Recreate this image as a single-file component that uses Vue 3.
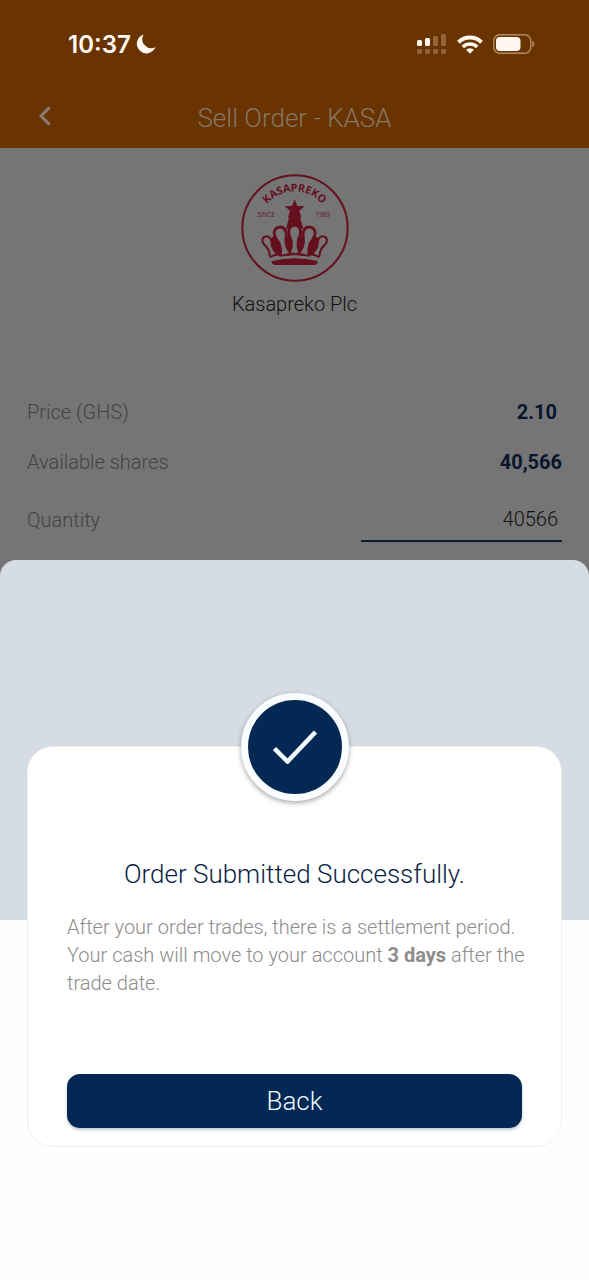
<script setup>
import { ref } from 'vue'

const quantity = ref('40566')
</script>

<template>
  <div class="screen">
    <header class="top">
      <div class="status">
        <div class="clock">
          <span>10:37</span>
          <svg class="moon" viewBox="0 0 20 20" aria-hidden="true">
            <path d="M7.6.6A9.6 9.6 0 1 0 19.4 13.2 9 9 0 0 1 7.6.6Z" fill="#fff8f0" />
          </svg>
        </div>
        <div class="indicators">
          <svg class="signal" viewBox="0 0 30 20" aria-hidden="true">
            <g fill="#fff8f0">
              <rect x="0" y="6" width="5" height="6" rx="1.5" />
              <rect x="8" y="4" width="5" height="8" rx="1.5" />
            </g>
            <g fill="#91643a">
              <rect x="16" y="2" width="5" height="10" rx="1.5" />
              <rect x="24" y="0" width="5" height="12" rx="1.5" />
              <rect x="0" y="15" width="5" height="5" rx="1.5" />
              <rect x="8" y="15" width="5" height="5" rx="1.5" />
              <rect x="16" y="15" width="5" height="5" rx="1.5" />
              <rect x="24" y="15" width="5" height="5" rx="1.5" />
            </g>
          </svg>
          <svg class="wifi" viewBox="0 0 26 19" aria-hidden="true">
            <g fill="none" stroke="#fff8f0" stroke-width="4">
              <path d="M1.5 7.2a16.4 16.4 0 0 1 23 0" />
              <path d="M5.800 11.900a10.300 10.300 0 0 1 14.400 0" stroke-width="3.600" />
            </g>
            <path d="M13 18.8l-3.9-4a5.6 5.6 0 0 1 7.8 0Z" fill="#fff8f0" />
          </svg>
          <svg class="battery" viewBox="0 0 42 20" aria-hidden="true">
            <rect x=".8" y=".8" width="37" height="18.4" rx="6" fill="none" stroke="#b08a68" stroke-width="1.4" />
            <rect x="3" y="3" width="24.5" height="14" rx="4" fill="#fff8f0" />
            <path d="M39.4 6.8c2.6 1 2.6 5.4 0 6.4Z" fill="#b08a68" />
          </svg>
        </div>
      </div>
      <div class="bar">
        <button class="back" type="button" aria-label="Go back">
          <svg viewBox="0 0 12 20" aria-hidden="true">
            <path d="M10.5 1.5L2 10l8.500 8.500" fill="none" stroke="#858078" stroke-width="3" />
          </svg>
        </button>
        <h1>Sell Order - KASA</h1>
      </div>
    </header>

    <main class="order">
      <div class="company">
        <svg class="logo" viewBox="46 25 324 324" role="img" aria-label="Kasapreko logo">
          <defs>
            <path id="logo-arc" d="M97 187a110 110 0 0 1 220 0" />
            <path id="hoop" d="M0 0C14 0 15 14 12 24C10 32 6 38 6 46V62L11 78H-11L-6 62V46C-6 38-10 32-12 24C-15 14-14 0 0 0Z" />
          </defs>
          <circle cx="208" cy="187" r="158" fill="none" stroke="#64101f" stroke-width="6" />
          <g fill="#64101f">
            <text class="logo-name" text-anchor="middle"><textPath href="#logo-arc" startOffset="50%">KASAPREKO</textPath></text>
            <text class="logo-small" x="95" y="155">SINCE</text>
            <text class="logo-small" x="269" y="155">1989</text>
            <path d="M207 101l8 20h22l-16 14 6 20-3 1 9 34h-52l9-34-3-1 6-20-16-14h22Z" />
            <path d="M143 272L119 228L160 202L182 216L207 186L232 216L254 202L295 228L271 272Q207 260 143 272Z" />
            <g stroke="#64101f" stroke-width="17" stroke-linejoin="round">
              <use href="#hoop" transform="translate(207 183)" />
              <use href="#hoop" transform="translate(160 189) rotate(-14)" />
              <use href="#hoop" transform="translate(254 189) rotate(14)" />
              <use href="#hoop" transform="translate(119 216) rotate(-25) scale(.72)" />
              <use href="#hoop" transform="translate(295 216) rotate(25) scale(.72)" />
            </g>
          </g>
          <g fill="#757575">
            <use href="#hoop" transform="translate(207 183)" />
            <use href="#hoop" transform="translate(160 189) rotate(-14)" />
            <use href="#hoop" transform="translate(254 189) rotate(14)" />
            <use href="#hoop" transform="translate(119 216) rotate(-25) scale(.72)" />
            <use href="#hoop" transform="translate(295 216) rotate(25) scale(.72)" />
          </g>
          <path d="M134 281Q207 265 280 281" fill="none" stroke="#757575" stroke-width="7" />
          <path d="M139 286Q207 270 275 286Q279 293 268 298H146Q135 293 139 286Z" fill="#64101f" />
        </svg>
        <h2>Kasapreko Plc</h2>
      </div>

      <dl class="facts">
        <div class="row">
          <dt>Price (GHS)</dt>
          <dd class="price">2.10</dd>
        </div>
        <div class="row">
          <dt>Available shares</dt>
          <dd>40,566</dd>
        </div>
      </dl>
      <div class="row quantity">
        <label for="quantity">Quantity</label>
        <input id="quantity" v-model="quantity" type="text" inputmode="numeric" />
      </div>
    </main>

    <section class="sheet" role="dialog" aria-labelledby="result-title">
      <div class="card">
        <div class="badge">
          <svg viewBox="0 0 44 34" aria-hidden="true">
            <path d="M1.500 18.500L14.500 31.500L42.500 2" fill="none" stroke="#f0faff" stroke-width="4.500" />
          </svg>
        </div>
        <h3 id="result-title">Order Submitted Successfully.</h3>
        <p>
          After your order trades, there is a settlement period.
          Your cash will move to your account <strong>3 days</strong> after the trade date.
        </p>
        <button class="done" type="button">Back</button>
      </div>
    </section>
  </div>
</template>

<style>
body {
  margin: 0;
  background: #757575;
}
</style>

<style scoped>
.screen {
  display: flex;
  flex-direction: column;
  min-height: 100vh;
  box-sizing: border-box;
  background: #757575;
  font-family: Roboto, "Liberation Sans", sans-serif;
  font-weight: 300;
  color: #111;
}

h1,
h2,
h3,
p,
dl,
dd {
  margin: 0;
  font-weight: 300;
}

button {
  border: 0;
  padding: 0;
  font: inherit;
  cursor: pointer;
}

.top {
  background: #6a3400;
  padding: 28px 0 14px;
}

.status {
  display: flex;
  justify-content: space-between;
  align-items: center;
  height: 32px;
  padding: 0 54px 0 68px;
}

.clock {
  display: flex;
  align-items: center;
  gap: 5px;
  color: #fff8f0;
  font-family: Inter, sans-serif;
  font-size: 24px;
  font-weight: 600;
}

.moon {
  width: 20px;
  height: 20px;
}

.indicators {
  display: flex;
  align-items: center;
  gap: 10px;
}

.signal {
  width: 30px;
  height: 20px;
}

.wifi {
  width: 26px;
  height: 19px;
}

.battery {
  width: 42px;
  height: 20px;
}

.bar {
  display: grid;
  grid-template-columns: 64px 1fr 64px;
  align-items: center;
  margin-top: 42px;
  height: 32px;
}

.back {
  justify-self: center;
  width: 24px;
  height: 32px;
  margin-right: -26px;
  background: none;
}

.back svg {
  width: 12px;
  height: 20px;
}

.bar h1 {
  text-align: center;
  font-size: 26px;
  line-height: 32px;
  color: #857765;
}

.order {
  padding: 26px 27px 15px;
}

.company {
  display: flex;
  flex-direction: column;
  align-items: center;
}

.logo {
  width: 108px;
  height: 108px;
}

.logo-name {
  font-family: "Open Sans", sans-serif;
  font-size: 32px;
  font-weight: 700;
}

.logo-small {
  font-family: "Open Sans", sans-serif;
  font-size: 19px;
  font-weight: 400;
}

.company h2 {
  margin-top: 8px;
  font-size: 20px;
  line-height: 28px;
}

.facts {
  padding-top: 69px;
}

.row {
  display: flex;
  justify-content: space-between;
  align-items: center;
  height: 50px;
  font-size: 20px;
  color: #434343;
}

.row dd {
  font-weight: 700;
  color: #07152c;
}

.row .price {
  padding-right: 5px;
}

.quantity {
  padding-top: 8px;
}

.quantity input {
  box-sizing: border-box;
  width: 201px;
  height: 43px;
  padding: 0 4px 0 0;
  border: 0;
  border-bottom: 2px solid #0b1c2c;
  border-radius: 0;
  outline: 0;
  background: none;
  font: inherit;
  color: #111;
  text-align: right;
}

.sheet {
  flex: 1;
  padding: 186px 27px 133px;
  border-radius: 16px 16px 0 0;
  background: linear-gradient(#d6dce4 360px, #fefefe 360px);
}

.card {
  position: relative;
  padding: 110px 39px 18px;
  border: 1px solid #efefef;
  border-radius: 26px;
  background: #fff;
}

.badge {
  position: absolute;
  top: -54px;
  left: 50%;
  display: flex;
  align-items: center;
  justify-content: center;
  box-sizing: border-box;
  width: 108px;
  height: 108px;
  border: 7px solid #fafdff;
  border-radius: 50%;
  background: #022853;
  box-shadow: 0 2px 5px rgba(0, 0, 0, 0.35);
  transform: translateX(-50%);
}

.badge svg {
  width: 44px;
  height: 34px;
}

.card h3 {
  text-align: center;
  font-size: 26px;
  line-height: 34px;
  color: #0a1f44;
}

.card p {
  margin: 22px -8px 0 0;
  font-size: 20px;
  line-height: 28px;
  color: #8c8c8c;
}

.card strong {
  font-weight: 700;
}

.done {
  width: 100%;
  height: 54px;
  margin-top: 77px;
  border-radius: 13px;
  background: #022853;
  box-shadow: 0 2px 3px rgba(2, 40, 83, 0.25);
  font-size: 26px;
  color: #eefaff;
}
</style>
